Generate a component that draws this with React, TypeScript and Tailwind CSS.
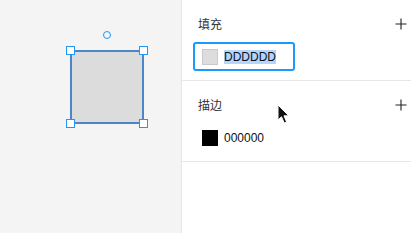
import React from "react";

const font = { fontFamily: '"Liberation Sans", "Noto Sans CJK SC", Arial, sans-serif' };

function Plus() {
  return (
    <svg width="12" height="12" viewBox="0 0 12 12" className="block">
      <path d="M6 0.5V11.5M0.5 6H11.5" stroke="#222" strokeWidth="1.1" fill="none" />
    </svg>
  );
}

function Section({
  title,
  color,
  value,
  focused,
}: {
  title: string;
  color: string;
  value: string;
  focused?: boolean;
}) {
  return (
    <div className="border-b border-[#e6e6e6] pl-[11px] pr-[4px] pt-3 pb-[9px]">
      <div className="flex h-6 items-center justify-between pl-[5px]">
        <span className="text-[12px] text-[#333]" style={{ fontFamily: '"Noto Sans CJK SC", sans-serif' }}>
          {title}
        </span>
        <Plus />
      </div>
      <div
        className={
          focused
            ? "mt-[6px] flex h-[29px] w-[102px] items-center rounded-[3px] border-2 border-[#1a9bfc] pl-[7px]"
            : "mt-[6px] flex h-[29px] w-[102px] items-center rounded-[3px] border-2 border-transparent pl-[7px]"
        }
      >
        <div
          className={
            color === "#dddddd"
              ? "h-4 w-4 flex-none border border-[#c9c9c9] bg-[#dddddd]"
              : "h-4 w-4 flex-none bg-[#000000]"
          }
        />
        <span
          className={
            focused
              ? "ml-[6px] bg-[#b4d5fe] text-[12px] leading-[14px] text-[#111]"
              : "ml-[6px] text-[12px] leading-[14px] text-[#111]"
          }
        >
          {value}
        </span>
      </div>
    </div>
  );
}

export default function App() {
  return (
    <div className="relative flex h-[233px] w-[411px] overflow-hidden bg-white" style={font}>
      <div className="relative h-full w-[181px] flex-none bg-[#f4f4f4]">
        {/* shape */}
        <div className="absolute left-[70px] top-[50px] h-[74px] w-[74px] border-2 border-[#4a86c8] bg-[#dcdcdc]" />
        {/* rotate handle */}
        <div className="absolute left-[103px] top-[31px] h-2 w-2 rounded-full border-[1.5px] border-[#2196f3] bg-[#f4f4f4]" />
        {/* corner handles */}
        <div className="absolute left-[66px] top-[46px] h-[9px] w-[9px] border border-[#2196f3] bg-white" />
        <div className="absolute left-[139px] top-[46px] h-[9px] w-[9px] border border-[#2196f3] bg-white" />
        <div className="absolute left-[66px] top-[119px] h-[9px] w-[9px] border border-[#2196f3] bg-white" />
        <div className="absolute left-[139px] top-[119px] h-[9px] w-[9px] border border-[#2196f3] bg-white" />
      </div>
      <div className="h-full flex-1 border-l border-[#e6e6e6] bg-white">
        <Section title="填充" color="#dddddd" value="DDDDDD" focused />
        <Section title="描边" color="#000000" value="000000" />
      </div>
      {/* mouse cursor */}
      <svg
        className="absolute left-[277px] top-[104px]"
        width="14"
        height="21"
        viewBox="0 0 14 21"
      >
        <path
          d="M1 1 L1 16 L4.5 12.8 L7.2 19 L9.6 18 L7 11.8 L11.8 11.8 Z"
          fill="#111"
          stroke="#fff"
          strokeWidth="1"
          strokeLinejoin="round"
        />
      </svg>
    </div>
  );
}
